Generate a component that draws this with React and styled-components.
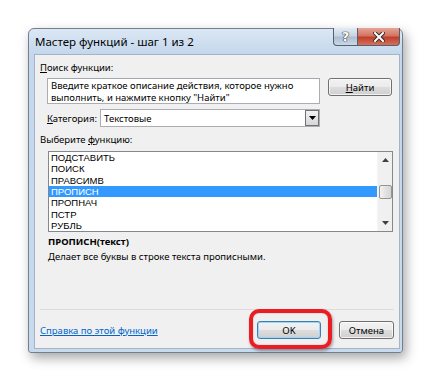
import React from "react";
import styled, { createGlobalStyle } from "styled-components";

const GlobalStyle = createGlobalStyle`
  html, body {
    margin: 0;
    padding: 0;
    background: #ffffff;
  }
  body {
    font-family: "Noto Sans", "Open Sans", sans-serif;
    color: #000;
  }
`;

const Page = styled.div`
  width: 434px;
  height: 383px;
  padding: 28px 0 0 28px;
  box-sizing: border-box;
`;

const Window = styled.div`
  width: 375px;
  height: 325px;
  box-sizing: border-box;
  border: 1px solid #727f8e;
  border-radius: 6px 6px 3px 3px;
  background: linear-gradient(to bottom, #dbe7f4 0px, #c4d7ec 25px, #c8daee 100%);
  box-shadow: 3px 5px 12px rgba(0, 0, 0, 0.35);
  display: flex;
  flex-direction: column;
  padding: 0 2px 3px 5px;
`;

const TitleBar = styled.div`
  height: 25px;
  display: flex;
  align-items: flex-start;
`;

const Title = styled.div`
  flex: 1;
  font-size: 11.5px;
  line-height: 26px;
  padding-left: 1px;
  color: #000;
`;

const CaptionButton = styled.div`
  margin-top: -1px;
  height: 18px;
  width: ${(p) => p.$w}px;
  box-sizing: border-box;
  border: 1px solid #55606e;
  border-top: none;
  display: flex;
  align-items: center;
  justify-content: center;
  ${(p) =>
    p.$close
      ? `
    background: linear-gradient(to bottom, #e4a597 0%, #d47462 45%, #c0402a 55%, #d4705c 100%);
    border-radius: 0 0 4px 0;
    border-left: none;
  `
      : `
    background: linear-gradient(to bottom, #e3ebf4 0%, #c8d5e3 45%, #aebfd2 55%, #c9d7e6 100%);
    border-radius: 0 0 0 4px;
  `}
`;

const HelpGlyph = styled.span`
  font-family: "DejaVu Sans", sans-serif;
  font-weight: bold;
  font-size: 13px;
  line-height: 1;
  color: #fff;
  text-shadow: 0 0 1px #333, 0 0 1px #333, 0 0 1px #333;
`;

const Client = styled.div`
  flex: 1;
  display: flex;
  flex-direction: column;
  background: #f0f0f0;
  border: 1px solid #a4b4c6;
  padding: 6px 5px 0 5px;
  font-size: 9.5px;
  line-height: 13px;
`;

const Label = styled.div`
  margin-top: ${(p) => p.$mt || 0}px;
  white-space: nowrap;
`;

const Row = styled.div`
  display: flex;
  align-items: ${(p) => p.$align || "center"};
  margin-top: ${(p) => p.$mt || 0}px;
  padding-left: ${(p) => p.$indent || 0}px;
`;

const SearchBox = styled.div`
  width: 273px;
  height: 26px;
  box-sizing: border-box;
  background: #fff;
  border: 1px solid #abadb3;
  border-top-color: #a3a7af;
  padding: 1px 3px;
  font-size: 9.5px;
  line-height: 12px;
  white-space: nowrap;
  overflow: hidden;
`;

const Button = styled.div`
  width: ${(p) => p.$w}px;
  height: 18px;
  box-sizing: border-box;
  margin-left: ${(p) => p.$ml || 0}px;
  border: 1px solid ${(p) => (p.$default ? "#3c7fb1" : "#707070")};
  border-radius: 3px;
  background: linear-gradient(to bottom, #f2f2f2 0%, #ebebeb 50%, #dddddd 51%, #cfcfcf 100%);
  box-shadow: inset 0 0 0 1px ${(p) => (p.$default ? "#9fd5f4" : "rgba(255,255,255,0.7)")};
  display: flex;
  align-items: center;
  justify-content: center;
  font-size: 9.5px;
  position: relative;
`;

const Select = styled.div`
  margin-left: 3px;
  width: 220px;
  height: 18px;
  box-sizing: border-box;
  background: #fff;
  border: 1px solid #abadb3;
  display: flex;
  align-items: center;
  padding-left: 3px;
`;

const SelectText = styled.span`
  flex: 1;
`;

const DropButton = styled.div`
  width: 14px;
  height: 16px;
  box-sizing: border-box;
  border: 1px solid #707070;
  background: linear-gradient(to bottom, #f2f2f2, #d6d6d6);
  display: flex;
  align-items: center;
  justify-content: center;
`;

const ListBox = styled.div`
  margin-top: 5px;
  margin-left: 8px;
  width: 345px;
  height: 81px;
  box-sizing: border-box;
  background: #fff;
  border: 1px solid #828790;
  display: flex;
`;

const Items = styled.div`
  flex: 1;
`;

const Item = styled.div`
  height: 11.33px;
  line-height: 11.33px;
  padding-left: 2px;
  font-family: "Liberation Sans", Arial, sans-serif;
  font-size: 9.5px;
  overflow: hidden;
  background: ${(p) => (p.$selected ? "#3399ff" : "transparent")};
  color: ${(p) => (p.$selected ? "#fff" : "#000")};
`;

const ScrollBar = styled.div`
  width: 15px;
  background: #f0f0f0;
  border-left: 1px solid #f4f4f4;
  display: flex;
  flex-direction: column;
  align-items: center;
  justify-content: space-between;
  padding: 6px 0 6px;
  box-sizing: border-box;
`;

const Thumb = styled.div`
  width: 13px;
  height: 14px;
  box-sizing: border-box;
  border: 1px solid #959595;
  border-radius: 2px;
  background: linear-gradient(to right, #f3f3f3, #e2e2e2 50%, #d6d6d6);
`;

const Signature = styled.div`
  margin-top: 3px;
  padding-left: 8px;
  font-weight: bold;
  font-size: 9.5px;
`;

const Description = styled.div`
  margin-top: 2px;
  padding-left: 8px;
`;

const Footer = styled.div`
  margin-top: auto;
  border-top: 1px solid #dcdcdc;
  padding: 11px 0 9px;
  display: flex;
  align-items: center;
`;

const HelpLink = styled.a`
  flex: 1;
  color: #0066cc;
  text-decoration: underline;
  font-size: 9.5px;
`;

const Highlight = styled.div`
  position: absolute;
  left: -9px;
  right: -12px;
  top: -13px;
  bottom: -11px;
  border: 4px solid #ec1c24;
  border-radius: 10px;
  box-shadow: 1px 2px 3px rgba(0, 0, 0, 0.35), inset 0 0 2px rgba(0, 0, 0, 0.2);
  pointer-events: none;
`;

const items = ["ПОДСТАВИТЬ", "ПОИСК", "ПРАВСИМВ", "ПРОПИСН", "ПРОПНАЧ", "ПСТР", "РУБЛЬ"];

export default function App() {
  return (
    <Page>
      <GlobalStyle />
      <Window>
        <TitleBar>
          <Title>Мастер функций - шаг 1 из 2</Title>
          <CaptionButton $w={25}>
            <HelpGlyph>?</HelpGlyph>
          </CaptionButton>
          <CaptionButton $w={42} $close>
            <svg width="12" height="10" viewBox="0 0 12 10">
              <path d="M2 1 L10 9 M10 1 L2 9" stroke="#3a2a28" strokeWidth="4" strokeLinecap="square" />
              <path d="M2 1 L10 9 M10 1 L2 9" stroke="#ffffff" strokeWidth="2" strokeLinecap="square" />
            </svg>
          </CaptionButton>
        </TitleBar>
        <Client>
          <Label>
            <u>П</u>оиск функции:
          </Label>
          <Row $mt={4} $indent={7} $align="flex-start">
            <SearchBox>
              Введите краткое описание действия, которое нужно
              <br />
              выполнить, и нажмите кнопку "Найти"
            </SearchBox>
            <Button $w={64} $ml={8}>
              <span>
                <u>Н</u>айти
              </span>
            </Button>
          </Row>
          <Row $mt={5} $indent={7}>
            <Label>
              <u>К</u>атегория:
            </Label>
            <Select>
              <SelectText>Текстовые</SelectText>
              <DropButton>
                <svg width="7" height="4" viewBox="0 0 7 4">
                  <path d="M0 0 H7 L3.5 4 Z" fill="#000" />
                </svg>
              </DropButton>
            </Select>
          </Row>
          <Label $mt={6}>
            Выберите <u>ф</u>ункцию:
          </Label>
          <ListBox>
            <Items>
              {items.map((it) => (
                <Item key={it} $selected={it === "ПРОПИСН"}>
                  {it}
                </Item>
              ))}
            </Items>
            <ScrollBar>
              <svg width="7" height="4" viewBox="0 0 7 4">
                <path d="M0 4 H7 L3.5 0 Z" fill="#404040" />
              </svg>
              <Thumb />
              <svg width="7" height="4" viewBox="0 0 7 4">
                <path d="M0 0 H7 L3.5 4 Z" fill="#404040" />
              </svg>
            </ScrollBar>
          </ListBox>
          <Signature>ПРОПИСН(текст)</Signature>
          <Description>Делает все буквы в строке текста прописными.</Description>
          <Footer>
            <HelpLink href="#">Справка по этой функции</HelpLink>
            <Button $w={64} $default>
              OK
              <Highlight />
            </Button>
            <Button $w={55} $ml={18}>
              Отмена
            </Button>
          </Footer>
        </Client>
      </Window>
    </Page>
  );
}
